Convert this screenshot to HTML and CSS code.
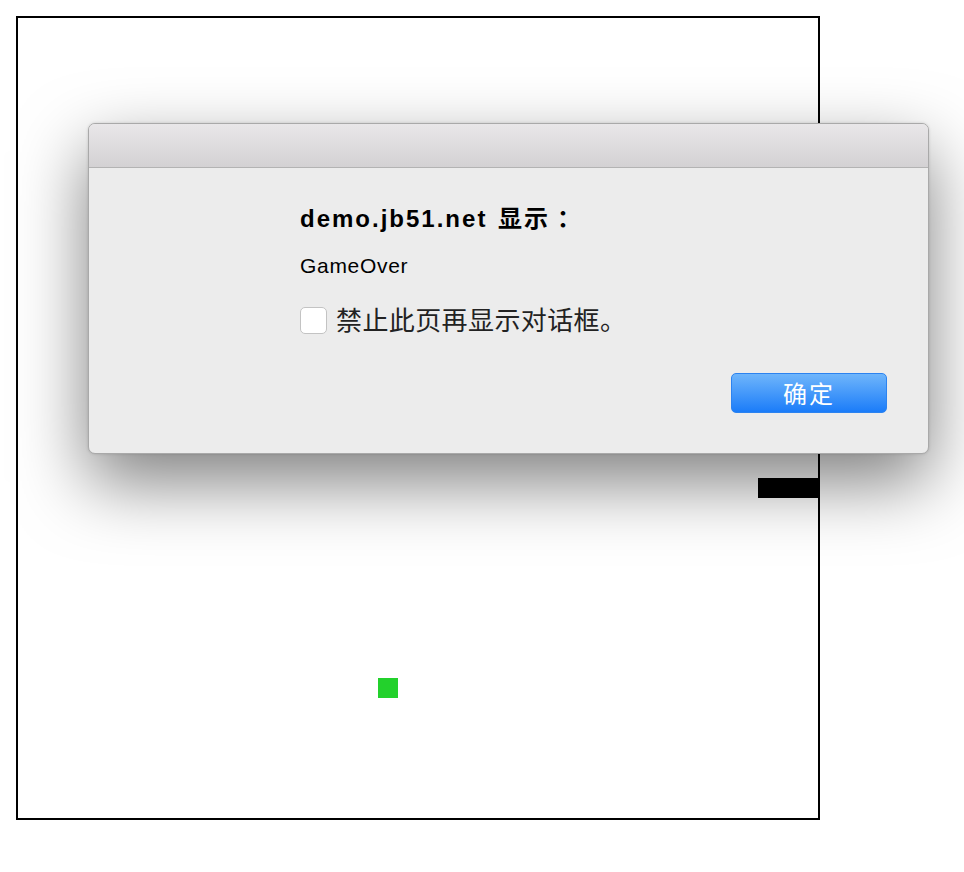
FILE: index.html
```html
<!DOCTYPE html>
<html lang="zh">
<head>
<meta charset="utf-8">
<title>Snake</title>
<link rel="stylesheet" href="styles.css">
</head>
<body>
<div class="stage">
  <div class="board">
    <div class="snake"></div>
    <div class="food"></div>
  </div>
</div>
<div class="dialog">
  <div class="titlebar"></div>
  <div class="content">
    <div class="heading"><span class="host">demo.jb51.net</span> <span class="cjk">显示<span class="colon">：</span></span></div>
    <div class="message">GameOver</div>
    <label class="option"><span class="checkbox"></span><span class="option-text">禁止此页再显示对话框。</span></label>
    <div class="actions"><button class="ok">确定</button></div>
  </div>
</div>
</body>
</html>
```

FILE: styles.css
```css
html, body {
  margin: 0;
  padding: 0;
  background: #ffffff;
}

body {
  font-family: "Liberation Sans", "Noto Sans CJK SC", sans-serif;
}

.stage {
  padding: 16px;
}

.board {
  position: relative;
  width: 800px;
  height: 800px;
  border: 2px solid #000;
}

.snake {
  position: absolute;
  left: 740px;
  top: 460px;
  width: 60px;
  height: 20px;
  background: #000;
}

.food {
  position: absolute;
  left: 360px;
  top: 660px;
  width: 20px;
  height: 20px;
  background: #23d12c;
}

.dialog {
  position: absolute;
  left: 88px;
  top: 123px;
  width: 839px;
  border: 1px solid #a9a9a9;
  border-radius: 7px;
  background: #ececec;
  overflow: hidden;
  box-shadow: 0 28px 70px rgba(0, 0, 0, 0.5), 0 0 3px rgba(0, 0, 0, 0.15);
}

.titlebar {
  height: 43px;
  background: linear-gradient(#e9e7e9, #d3d1d3);
  border-bottom: 1px solid #b3b3b3;
}

.content {
  display: flex;
  flex-direction: column;
  padding: 36px 41px 40px 211px;
}

.heading {
  height: 30px;
  font-size: 24px;
  line-height: 30px;
  font-weight: bold;
  color: #000;
  white-space: nowrap;
}

.host {
  letter-spacing: 2px;
}

.cjk {
  margin-left: 4px;
  letter-spacing: 2px;
}

.colon {
  padding-left: 7px;
}

.message {
  margin-top: 19px;
  font-size: 21px;
  line-height: 26px;
  letter-spacing: 0.7px;
  color: #000;
}

.option {
  margin-top: 27px;
  display: flex;
  align-items: center;
  gap: 9px;
  height: 28px;
}

.checkbox {
  width: 25px;
  height: 25px;
  border: 1px solid #c3c3c3;
  border-radius: 5px;
  background: #fff;
}

.option-text {
  font-size: 26px;
  line-height: 28px;
  letter-spacing: 0.4px;
  color: #222;
  position: relative;
  top: 1px;
}

.actions {
  margin-top: 39px;
  display: flex;
  justify-content: flex-end;
}

.ok {
  width: 156px;
  height: 40px;
  border: 1px solid #2c83f0;
  border-radius: 5px;
  background: linear-gradient(#6fb5fb, #1b7cf9);
  color: #fff;
  font-family: "Noto Sans CJK SC", sans-serif;
  font-size: 24px;
  letter-spacing: 2px;
  padding: 0;
  line-height: 36px;
}
```
